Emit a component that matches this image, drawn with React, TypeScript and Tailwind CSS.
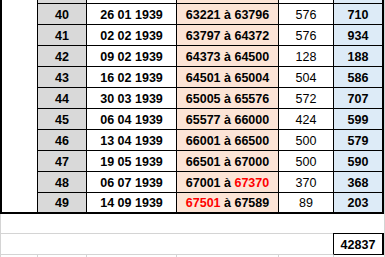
const rows = [
  { n: '40', d: '26 01 1939', a: '63221', b: '63796', q: '576', t: '710' },
  { n: '41', d: '02 02 1939', a: '63797', b: '64372', q: '576', t: '934' },
  { n: '42', d: '09 02 1939', a: '64373', b: '64500', q: '128', t: '188' },
  { n: '43', d: '16 02 1939', a: '64501', b: '65004', q: '504', t: '586' },
  { n: '44', d: '30 03 1939', a: '65005', b: '65576', q: '572', t: '707' },
  { n: '45', d: '06 04 1939', a: '65577', b: '66000', q: '424', t: '599' },
  { n: '46', d: '13 04 1939', a: '66001', b: '66500', q: '500', t: '579' },
  { n: '47', d: '19 05 1939', a: '66501', b: '67000', q: '500', t: '590' },
  { n: '48', d: '06 07 1939', a: '67001', b: '67370', q: '370', t: '368', redB: true },
  { n: '49', d: '14 09 1939', a: '67501', b: '67589', q: '89', t: '203', redA: true },
];

const cell = 'flex items-center justify-center pt-[2px] border-r border-black';

export default function App() {
  return (
    <div
      className="w-[385px] h-[257px] overflow-hidden bg-white text-black border-r border-[#d4d4d4] text-[12.5px] leading-[19px]"
      style={{ fontFamily: '"Liberation Sans", Arial, sans-serif' }}
    >
      {/* tableau */}
      <div className="grid grid-cols-[36px_49px_90px_102px_55px_50px] grid-rows-[4px_repeat(10,21px)] border-l-2 border-black">
        <div className="row-span-11 border-r border-b-2 border-black" />
        {/* ligne coupée en haut */}
        <div className="bg-[#d9d9d9] border-r border-b border-black" />
        <div className="border-r border-b border-black" />
        <div className="bg-[#fce4d6] border-r border-b border-black" />
        <div className="border-r border-b border-black" />
        <div className="bg-[#ddebf7] border-r-2 border-b border-black" />

        {rows.map((r, i) => {
          const bb = i === rows.length - 1 ? 'border-b-2' : 'border-b';
          return [
            <div key={r.n + 'n'} className={`${cell} ${bb} bg-[#d9d9d9] font-bold`}>{r.n}</div>,
            <div key={r.n + 'd'} className={`${cell} ${bb} font-bold`}>{r.d}</div>,
            <div key={r.n + 'r'} className={`${cell} ${bb} bg-[#fce4d6] font-bold whitespace-pre`}>
              <span className={r.redA ? 'text-[#ff0000]' : ''}>{r.a}</span>
              {' à '}
              <span className={r.redB ? 'text-[#ff0000]' : ''}>{r.b}</span>
            </div>,
            <div key={r.n + 'q'} className={`${cell} ${bb}`}>{r.q}</div>,
            <div key={r.n + 't'} className={`${cell} ${bb} border-r-2 bg-[#ddebf7] font-bold`}>{r.t}</div>,
          ];
        })}
      </div>

      {/* lignes vides + total */}
      <div className="flex h-[20px] border-l border-[#d4d4d4]">
        <div className="w-[332px] border-b border-[#d4d4d4]" />
        <div className="w-[51px] border-b border-black" />
      </div>
      <div className="flex h-[21px] border-l border-[#d4d4d4]">
        <div className="w-[333px] border-b border-[#d4d4d4] border-r border-r-black" />
        <div className="w-[50px] flex items-center justify-center pt-[2px] border-r-2 border-b border-black font-bold">
          42837
        </div>
      </div>
      <div className="flex h-[2px] border-l border-[#d4d4d4]">
        <div className="w-[37px] border-r border-[#d4d4d4]" />
        <div className="w-[49px] border-r border-[#d4d4d4]" />
        <div className="w-[90px] border-r border-[#d4d4d4]" />
        <div className="w-[102px] border-r border-[#d4d4d4]" />
        <div className="w-[55px] border-r border-[#d4d4d4]" />
        <div className="w-[50px]" />
      </div>
    </div>
  );
}
